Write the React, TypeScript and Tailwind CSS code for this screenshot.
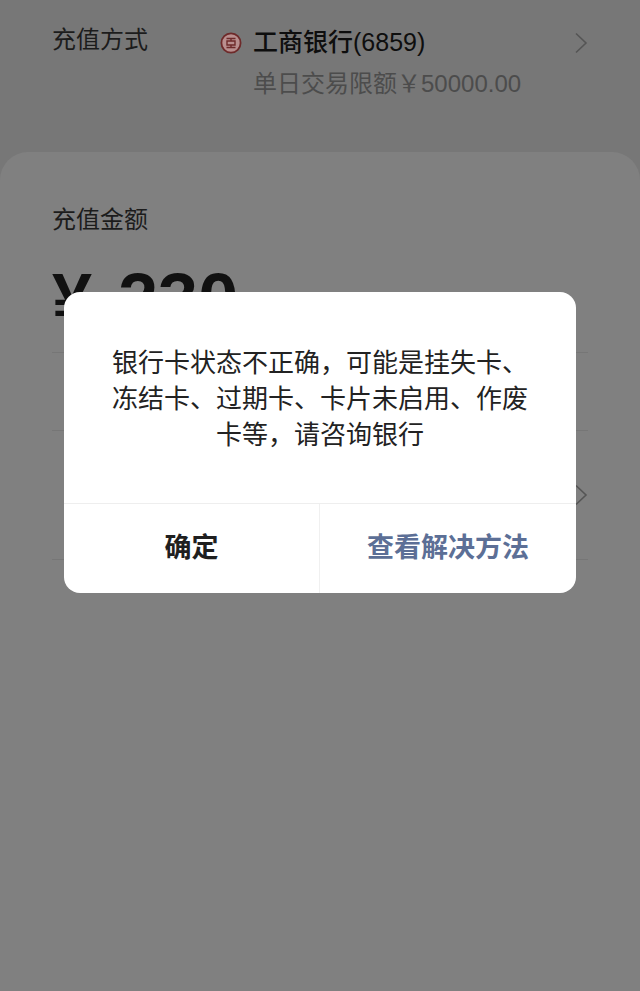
const FONT = 'font-["Liberation_Sans","Noto_Sans_CJK_SC",sans-serif]';

function Chevron({ className }: { className?: string }) {
  return (
    <svg className={className} width="14" height="24" viewBox="0 0 14 24" fill="none">
      <path d="M2 2.5 L12 12 L2 21.5" stroke="#555555" strokeWidth="1.6" />
    </svg>
  );
}

// ICBC round logo
function BankLogo() {
  return (
    <svg width="22" height="22" viewBox="0 0 22 22" fill="none">
      <circle cx="11" cy="11" r="9.6" fill="#b98f8f" stroke="#6e2a2a" strokeWidth="1.8" />
      <path d="M6.5 6.5H15.5M6.5 15.5H15.5M11 6.5V9M11 13V15.5M7 9H15V13H7Z" stroke="#6e2a2a" strokeWidth="1.4" />
    </svg>
  );
}

export default function App() {
  return (
    <div className={`relative h-[991px] w-[640px] overflow-hidden bg-[#777777] ${FONT}`}>
      {/* pay method row */}
      <div className="flex h-[152px] items-start pl-[52px] pr-[52px] pt-[24px]">
        <div className="w-[168px] text-[24px] leading-[32px] text-[#1c1c1c]">充值方式</div>
        <div className="flex flex-1 flex-col">
          <div className="flex h-[38px] items-center">
            <BankLogo />
            <span className="ml-[11px] text-[25px] font-medium text-[#0e0e0e]">工商银行(6859)</span>
            <Chevron className="ml-auto" />
          </div>
          <div className="mt-[6px] pl-[33px] text-[24px] leading-[32px] text-[#4c4c4c]">单日交易限额￥50000.00</div>
        </div>
      </div>

      {/* amount card */}
      <div className="h-[839px] rounded-t-[28px] bg-[#808080] px-[52px] pt-[52px]">
        <div className="text-[24px] leading-[32px] text-[#1c1c1c]">充值金额</div>
        <div className="mt-[20px] flex h-[97px] items-center gap-[26px] border-b border-[#767676] pb-[10px] text-[72px] font-bold leading-none text-[#111111]">
          <span>¥</span>
          <span>230</span>
        </div>
        <div className="h-[78px] border-b border-[#767676]" />
        <div className="flex h-[129px] items-center justify-end border-b border-[#767676]">
          <Chevron />
        </div>
      </div>

      {/* dialog */}
      <div className="absolute left-[64px] top-[292px] flex h-[301px] w-[512px] flex-col rounded-[16px] bg-white">
        <div className="flex h-[211px] justify-center px-[32px] pt-[53px] text-center text-[26px] leading-[36px] text-[#222222]">
          <p>
            银行卡状态不正确，可能是挂失卡、
            <br />
            冻结卡、过期卡、卡片未启用、作废
            <br />
            卡等，请咨询银行
          </p>
        </div>
        <div className="flex flex-1 border-t border-[#eeeeee] text-[27px] font-bold">
          <div className="flex w-[256px] items-center justify-center border-r border-[#f0f0f0] text-[#1f1f1f]">确定</div>
          <div className="flex flex-1 items-center justify-center text-[#5c6f96]">查看解决方法</div>
        </div>
      </div>
    </div>
  );
}
